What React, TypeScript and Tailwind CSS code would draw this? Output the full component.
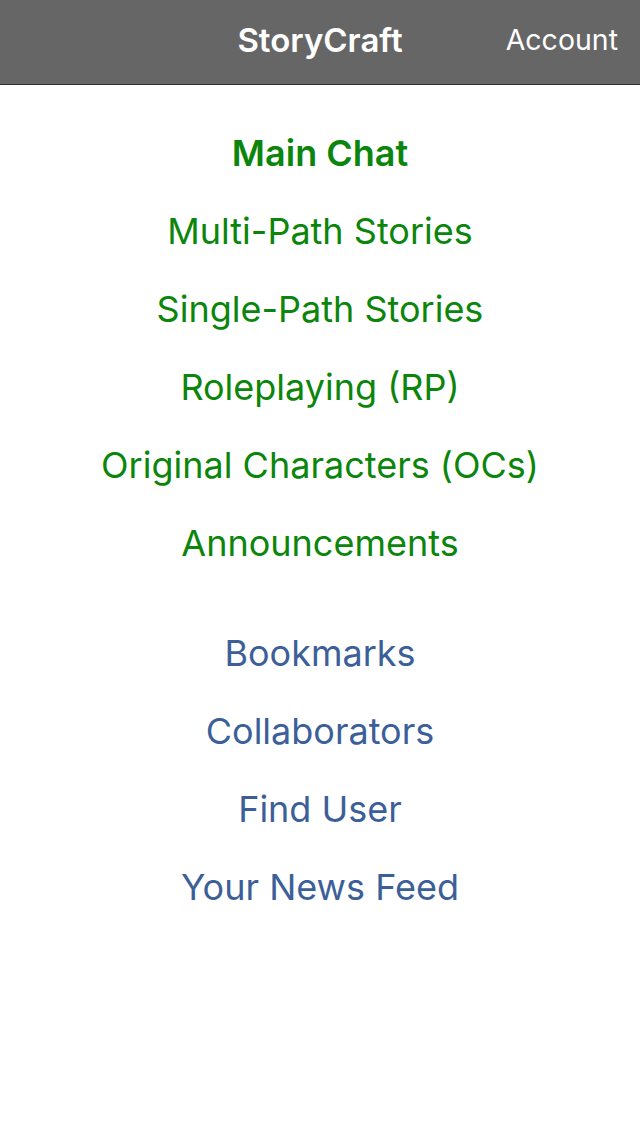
const mainLinks = [
  "Multi-Path Stories",
  "Single-Path Stories",
  "Roleplaying (RP)",
  "Original Characters (OCs)",
  "Announcements",
];

const userLinks = ["Bookmarks", "Collaborators", "Find User", "Your News Feed"];

export default function App() {
  return (
    <div className="min-h-screen bg-white font-['Inter',sans-serif]">
      <header className="relative flex h-[85px] items-center justify-center border-b border-[#2f2f2f] bg-[#666666] pb-[3px]">
        <h1 className="text-[33px] font-semibold text-white">StoryCraft</h1>
        <button type="button" className="absolute right-[22px] text-[28.5px] text-white">
          Account
        </button>
      </header>

      <nav className="flex flex-col items-center pt-[29px]">
        <a className="flex h-[78px] items-center text-[36px] font-semibold text-[#0b850b]">Main Chat</a>
        {mainLinks.map((label) => (
          <a key={label} className="flex h-[78px] items-center text-[36px] text-[#0b850b]">
            {label}
          </a>
        ))}
      </nav>

      <nav className="mt-[32px] flex flex-col items-center">
        {userLinks.map((label) => (
          <a key={label} className="flex h-[78px] items-center text-[36px] text-[#3d5f99]">
            {label}
          </a>
        ))}
      </nav>
    </div>
  );
}
